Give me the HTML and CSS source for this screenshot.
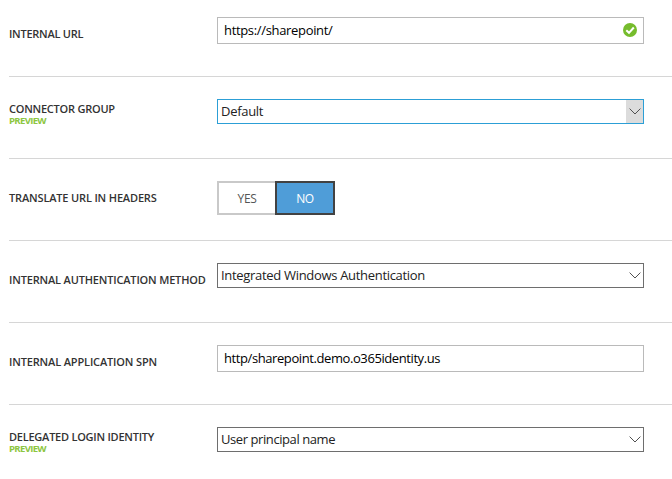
FILE: index.html
```
<!DOCTYPE html>
<html lang="en">
<head>
<meta charset="utf-8">
<title>Application settings</title>
<link rel="stylesheet" href="styles.css">
</head>
<body>
<main class="form">
  <section class="row">
    <div class="label"><span class="t-url">INTERNAL URL</span></div>
    <div class="input"><span class="v-url">https://sharepoint/</span>
      <svg class="check" viewBox="0 0 14 14"><circle cx="7" cy="7" r="7"/><path d="M3.3 7.2 6 9.8 10.8 4.5"/></svg>
    </div>
  </section>
  <section class="row">
    <div class="label two"><span class="t-group">CONNECTOR GROUP</span><small>PREVIEW</small></div>
    <div class="select active"><span class="v-default">Default</span><i class="arrow"><svg viewBox="0 0 12 7"><path d="M.6.6 6 6 11.4.6"/></svg></i></div>
  </section>
  <section class="row">
    <div class="label"><span class="t-translate">TRANSLATE URL IN HEADERS</span></div>
    <div class="toggle"><div class="yes"><span>YES</span></div><div class="no"><span>NO</span></div></div>
  </section>
  <section class="row">
    <div class="label"><span class="t-auth">INTERNAL AUTHENTICATION METHOD</span></div>
    <div class="select"><span class="v-auth">Integrated Windows Authentication</span><i class="arrow"><svg viewBox="0 0 12 7"><path d="M.6.6 6 6 11.4.6"/></svg></i></div>
  </section>
  <section class="row">
    <div class="label"><span class="t-spn">INTERNAL APPLICATION SPN</span></div>
    <div class="input"><span class="v-spn">http/sharepoint.demo.o365identity.us</span></div>
  </section>
  <section class="row">
    <div class="label two"><span class="t-login">DELEGATED LOGIN IDENTITY</span><small>PREVIEW</small></div>
    <div class="select"><span class="v-user">User principal name</span><i class="arrow"><svg viewBox="0 0 12 7"><path d="M.6.6 6 6 11.4.6"/></svg></i></div>
  </section>
</main>
</body>
</html>
```
FILE: styles.css
```
* { box-sizing: border-box; }
body { margin: 0; background: #fff; color: #222; font: 13px/18px "Open Sans", "Noto Sans", sans-serif; overflow: hidden; }
.form { padding-left: 9px; }
.row { display: grid; grid-template-columns: 208px 427px; align-items: start; height: 82px; padding-top: 22px; border-bottom: 1px solid #d6d6d6; }
.row:first-child { height: 77px; padding-top: 17px; }
.row:last-child { border-bottom: 0; }
.label { padding-top: 9px; font-size: 11px; line-height: 16px; font-weight: 600; color: #333; white-space: nowrap; letter-spacing: -.2px; }
.label.two { padding-top: 3px; }
.label span { display: block; }
.label.two span { line-height: 14px; }
.label small { display: block; font-size: 9.6px; line-height: 9px; font-weight: 700; color: #8dc63f; letter-spacing: -.7px; }
.input { display: flex; align-items: center; justify-content: space-between; height: 27px; padding: 0 6px 2px; border: 1px solid #bababa; color: #000; }
.select { display: flex; align-items: center; justify-content: space-between; height: 25px; padding-left: 3px; border: 1px solid #6e6e6e; }
.select.active { border-color: #2c9fd6; }
.input span, .select span { white-space: nowrap; }
.select span { padding-bottom: 2px; }
.t-url { letter-spacing: -.25px; }
.t-group { letter-spacing: -.23px; }
.t-translate { letter-spacing: -.16px; }
.t-auth { letter-spacing: -.17px; }
.t-spn { letter-spacing: -.15px; }
.t-login { letter-spacing: -.24px; }
.v-url { letter-spacing: -.33px; }
.v-default { letter-spacing: -.3px; }
.v-auth { letter-spacing: -.31px; }
.v-spn { letter-spacing: -.41px; }
.v-user { letter-spacing: -.42px; }
.check { width: 14px; height: 14px; }
.check circle { fill: #76bc2d; }
.check path { fill: none; stroke: #fff; stroke-width: 2; }
.arrow { display: flex; align-items: center; justify-content: center; width: 17px; height: 23px; }
.active .arrow { background: #dcdcdc; }
.arrow svg { width: 12px; height: 7px; }
.arrow path { fill: none; stroke: #505050; stroke-width: 1; }
.toggle { display: flex; width: 118px; height: 34px; font-size: 12px; text-align: center; letter-spacing: -.4px; }
.yes, .no { display: flex; align-items: center; justify-content: center; padding-top: 2px; }
.yes { width: 58px; border: 2px solid #c9c9c9; border-right: 0; color: #555; }
.no { width: 60px; border: 2px solid #424242; background: #4f9dd8; color: #fff; }
```
